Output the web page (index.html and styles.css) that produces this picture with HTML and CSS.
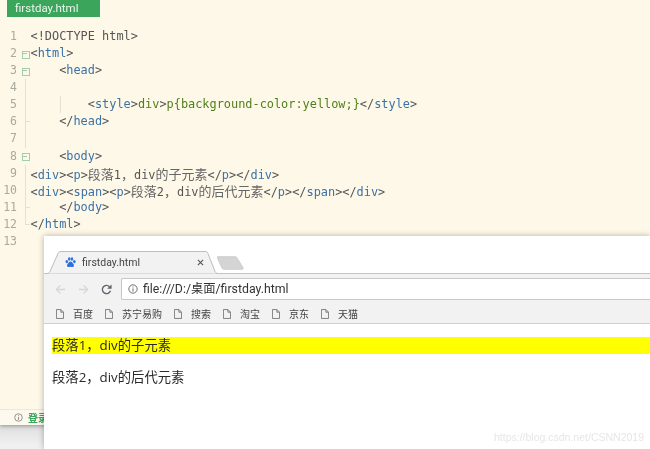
FILE: index.html
```html
<!DOCTYPE html>
<html lang="zh">
<head>
<meta charset="utf-8">
<title>firstday.html</title>
<link rel="stylesheet" href="styles.css">
</head>
<body>
<div class="desktop">
  <section class="editor">
    <div class="file-tab">firstday.html</div>
    <div class="code">
      <div class="row"><span class="num">1</span><span class="fold"></span><pre>&lt;!DOCTYPE html&gt;</pre></div>
      <div class="row"><span class="num">2</span><span class="fold box"></span><pre>&lt;<b>html</b>&gt;</pre></div>
      <div class="row"><span class="num">3</span><span class="fold box"></span><pre>    &lt;<b>head</b>&gt;</pre></div>
      <div class="row guide"><span class="num">4</span><span class="fold line"></span><pre> </pre></div>
      <div class="row guide"><span class="num">5</span><span class="fold line"></span><pre>        &lt;<b>style</b>&gt;<i>div</i>&gt;<i>p{background-color:yellow;}</i>&lt;/<b>style</b>&gt;</pre></div>
      <div class="row"><span class="num">6</span><span class="fold tee"></span><pre>    &lt;/<b>head</b>&gt;</pre></div>
      <div class="row"><span class="num">7</span><span class="fold line"></span><pre> </pre></div>
      <div class="row"><span class="num">8</span><span class="fold box"></span><pre>    &lt;<b>body</b>&gt;</pre></div>
      <div class="row"><span class="num">9</span><span class="fold line"></span><pre>&lt;<b>div</b>&gt;&lt;<b>p</b>&gt;<span class="cjk">段落</span>1<span class="cjk">，</span>div<span class="cjk">的子元素</span>&lt;/<b>p</b>&gt;&lt;/<b>div</b>&gt;</pre></div>
      <div class="row"><span class="num">10</span><span class="fold line"></span><pre>&lt;<b>div</b>&gt;&lt;<b>span</b>&gt;&lt;<b>p</b>&gt;<span class="cjk">段落</span>2<span class="cjk">，</span>div<span class="cjk">的后代元素</span>&lt;/<b>p</b>&gt;&lt;/<b>span</b>&gt;&lt;/<b>div</b>&gt;</pre></div>
      <div class="row"><span class="num">11</span><span class="fold tee"></span><pre>    &lt;/<b>body</b>&gt;</pre></div>
      <div class="row"><span class="num">12</span><span class="fold end"></span><pre>&lt;/<b>html</b>&gt;</pre></div>
      <div class="row"><span class="num">13</span><span class="fold"></span><pre> </pre></div>
    </div>
    <footer class="status">
      <svg class="status-icon" viewBox="0 0 10 10"><circle cx="5" cy="5" r="4.2" fill="none" stroke="#8a8a80" stroke-width="1"/><path d="M5 2.6v1M5 4.6v3" stroke="#8a8a80" stroke-width="1.2"/></svg>
      <span class="login">登录</span>
    </footer>
  </section>

  <section class="browser">
    <div class="tabstrip">
      <div class="tab">
        <svg class="tab-shape" viewBox="0 0 172 23" preserveAspectRatio="none"><path d="M0 22.500H1C2.500 22.500 3.500 21.500 4 20.500L12 2.500C12.500 1 13.500 .5 15 .5H159C160.500 .5 161.500 1 162 2.500L169 20.500C169.500 21.500 170.500 22.500 172 22.500" fill="#f2f2f2" stroke="#bdbdbd"/></svg>
        <svg class="favicon" viewBox="0 0 12 12"><g fill="#2b6fe0"><ellipse cx="2" cy="5" rx="1.4" ry="1.8"/><ellipse cx="4.6" cy="2.3" rx="1.4" ry="1.9"/><ellipse cx="7.6" cy="2.3" rx="1.4" ry="1.9"/><ellipse cx="10.2" cy="5" rx="1.4" ry="1.8"/><path d="M6 5C4.5 5 4 6.5 3 7.4 2 8.3 1.8 11 4 11c1 0 1.300-.4 2-.4s1 .4 2 .4c2.200 0 2-2.700 1-3.600C8 6.500 7.500 5 6 5z"/></g></svg>
        <span class="tab-title">firstday.html</span>
        <svg class="tab-close" viewBox="0 0 8 8"><path d="M1 1l6 6M7 1L1 7" stroke="#555" stroke-width="1.300"/></svg>
      </div>
      <svg class="newtab" viewBox="0 0 28 14"><path d="M.5.500H19C20 .5 20.500 1 21 2L27 12C27.500 13 27 13.500 26 13.500H7C6 13.500 5.500 13 5 12L.5 2C0 1 0 .5.500.5z" fill="#d4d4d4" stroke="#cdcdcd"/></svg>
    </div>
    <div class="toolbar">
      <svg class="nav" viewBox="0 0 12 12"><path d="M11 6H2M6 1.500L1.500 6 6 10.500" fill="none" stroke="#d6d6d6" stroke-width="1.400"/></svg>
      <svg class="nav" viewBox="0 0 12 12"><path d="M1 6h9M6 1.500L10.500 6 6 10.500" fill="none" stroke="#d6d6d6" stroke-width="1.400"/></svg>
      <svg class="nav" viewBox="0 0 12 12"><path d="M10.300 7.300A4.500 4.500 0 1 1 9.300 2.900" fill="none" stroke="#5f6368" stroke-width="1.500"/><path d="M11.500 .5v4.800H6.700z" fill="#5f6368"/></svg>
      <div class="omnibox">
        <svg class="info" viewBox="0 0 12 12"><circle cx="6" cy="6" r="5" fill="none" stroke="#5f6368" stroke-width="1.100"/><path d="M6 3v1.200M6 5.200V9" stroke="#5f6368" stroke-width="1.100"/></svg>
        <span>file:///D:/桌面/firstday.html</span>
      </div>
    </div>
    <nav class="bookmarks">
      <a><svg class="page" viewBox="0 0 9 11"><path d="M.5.500H5.500L8.500 3.500V10.500H.5zM5.500.500V3.500H8.500" fill="none" stroke="#666" stroke-width=".9"/></svg>百度</a>
      <a><svg class="page" viewBox="0 0 9 11"><path d="M.5.500H5.500L8.500 3.500V10.500H.5zM5.500.500V3.500H8.500" fill="none" stroke="#666" stroke-width=".9"/></svg>苏宁易购</a>
      <a><svg class="page" viewBox="0 0 9 11"><path d="M.5.500H5.500L8.500 3.500V10.500H.5zM5.500.500V3.500H8.500" fill="none" stroke="#666" stroke-width=".9"/></svg>搜索</a>
      <a><svg class="page" viewBox="0 0 9 11"><path d="M.5.500H5.500L8.500 3.500V10.500H.5zM5.500.500V3.500H8.500" fill="none" stroke="#666" stroke-width=".9"/></svg>淘宝</a>
      <a><svg class="page" viewBox="0 0 9 11"><path d="M.5.500H5.500L8.500 3.500V10.500H.5zM5.500.500V3.500H8.500" fill="none" stroke="#666" stroke-width=".9"/></svg>京东</a>
      <a><svg class="page" viewBox="0 0 9 11"><path d="M.5.500H5.500L8.500 3.500V10.500H.5zM5.500.500V3.500H8.500" fill="none" stroke="#666" stroke-width=".9"/></svg>天猫</a>
    </nav>
    <main class="page-body">
      <p class="first">段落1，div的子元素</p>
      <p class="second">段落2，div的后代元素</p>
    </main>
    <div class="watermark">https://blog.csdn.net/CSNN2019</div>
  </section>
</div>
</body>
</html>
```
FILE: styles.css
```css
* { box-sizing: border-box; }
html, body { margin: 0; padding: 0; }
body { width: 650px; height: 449px; overflow: hidden; background: #ededed; }

.desktop { position: relative; width: 650px; height: 449px; overflow: hidden; background: linear-gradient(#dedede, #f0f0f0 20px) 0 425px no-repeat, #f0f0f0; filter: blur(.3px); }

.editor { display: flex; flex-direction: column; height: 425px; background: #fef8e8; box-shadow: 0 1px 4px rgba(0,0,0,.35); }
.file-tab { width: 93px; height: 17px; margin-left: 7px; padding-left: 8px; background: #3ba55c; color: #eaf6ee; font: 11.500px/17px Roboto, "Liberation Sans", sans-serif; }

.code { flex: 1; padding-top: 11px; }
.row { display: flex; height: 17.080px; }
.num { width: 17px; text-align: right; color: #a9a99e; font: 11.500px/17px "DejaVu Sans Mono", monospace; }
.fold { position: relative; width: 13.500px; }
.row pre { margin: 0; color: #555; font: 11.900px/17px "DejaVu Sans Mono", "Noto Sans CJK SC", monospace; white-space: pre; }
.row b { font-weight: 400; color: #3a72a8; }
.row i { font-style: normal; color: #4f7f18; }
.row .cjk { font: 13px/17px "Noto Sans CJK SC", sans-serif; color: #666; }

.fold.line::before, .fold.tee::before, .fold.end::before { content: ""; position: absolute; left: 8px; top: 0; bottom: 0; width: 1px; background: #e2e0d2; }
.fold.end::before { bottom: 8px; }
.fold.tee::after, .fold.end::after { content: ""; position: absolute; left: 8px; top: 8px; width: 5px; height: 1px; background: #e2e0d2; }
.fold.box::before { content: ""; position: absolute; left: 5px; top: 5.500px; width: 6px; height: 6px; border: 1px solid #a4cdb0; }
.fold.box::after { content: ""; position: absolute; left: 6px; top: 8px; width: 4px; height: 1px; background: #a4cdb0; }
.guide pre { background: linear-gradient(#e4e2d4, #e4e2d4) 29px 0 / 1px 100% no-repeat; }

.status { display: flex; align-items: center; gap: 5px; height: 16px; padding-left: 14px; background: #fdf9ef; border-top: 1px solid #ece7d8; }
.status-icon { width: 9px; height: 9px; }
.login { color: #3ba55c; font: 700 10px/14px "Noto Sans CJK SC", sans-serif; }

.browser { position: absolute; left: 44px; top: 236px; width: 606px; height: 213px; background: #fff; box-shadow: 0 0 6px rgba(0,0,0,.3); }
.tabstrip { display: flex; align-items: flex-end; height: 38px; padding-left: 2px; border-bottom: 1px solid #c4c4c4; }
.tab { position: relative; display: flex; align-items: center; width: 172px; height: 23px; margin-bottom: -1px; padding: 0 0 0 19px; }
.tab-shape { position: absolute; left: 0; top: 0; width: 100%; height: 100%; }
.favicon, .tab-title, .tab-close { position: relative; }
.favicon { width: 11px; height: 11px; }
.tab-title { width: 115px; margin-left: 6px; color: #444; font: 10.500px/14px Roboto, "Liberation Sans", sans-serif; }
.tab-close { width: 7px; height: 7px; }
.newtab { width: 27px; height: 14px; margin: 0 0 3px -1px; }

.toolbar { display: flex; align-items: center; gap: 12px; height: 30px; padding-left: 11px; background: #f2f2f2; }
.nav { width: 11px; height: 11px; }
.omnibox { display: flex; flex: 1; align-items: center; gap: 5px; height: 22px; margin-left: -3px; padding-left: 6px; background: #fff; border: 1px solid #c8c8c8; border-right: 0; border-radius: 2px 0 0 2px; color: #333; font: 12.300px/18px Roboto, "Noto Sans CJK SC", sans-serif; }
.info { width: 10px; height: 10px; }

.bookmarks { display: flex; gap: 12px; height: 20px; padding-left: 12px; background: #f2f2f2; border-bottom: 1px solid #cfcfcf; color: #444; font: 10px/19px "Noto Sans CJK SC", sans-serif; }
.bookmarks a { display: flex; align-items: center; gap: 9px; }
.page { width: 8px; height: 10px; }

.page-body { padding: 13px 0 0 8px; color: #2a2a2a; font: 13.330px/17px "Open Sans", "Noto Sans CJK SC", sans-serif; }
.page-body p { margin: 0; }
.page-body .first { background: #ff0; }
.page-body .second { margin-top: 14.500px; }

.watermark { position: absolute; right: 6px; bottom: 6px; color: #e6e6e6; font: 10.500px/12px "Liberation Sans", sans-serif; filter: blur(.5px); }
```
